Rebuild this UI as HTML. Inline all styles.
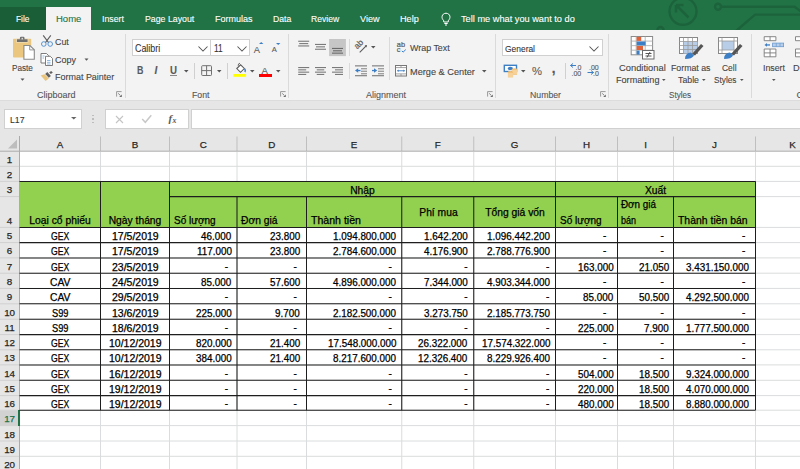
<!DOCTYPE html>
<html><head><meta charset="utf-8"><style>
html,body{margin:0;padding:0;}
body{width:800px;height:469px;overflow:hidden;position:relative;background:#fff;font-family:"Liberation Sans", sans-serif;}
.t{position:absolute;white-space:pre;line-height:1;transform-origin:0 0;-webkit-text-stroke:0.1px currentColor;}
.c{-webkit-text-stroke:0.25px currentColor;}
svg{shape-rendering:auto;}
</style></head><body>
<div style="position:absolute;left:0px;top:0px;width:800px;height:30px;background:#217346;"></div><svg style="position:absolute;left:600px;top:0px;overflow:visible;" width="200" height="30" viewBox="0 0 200 30">
<g fill="none" stroke="#1c633c" stroke-width="2.4">
<circle cx="83" cy="11.3" r="13.5"/>
<path d="M88.5 17.5 L76.5 5.5 M76 5 L76 12.5 M76 5 L83.5 5" stroke-width="2.6"/>
<circle cx="118" cy="6.8" r="3"/>
<path d="M121 6.8 L194.5 6.8 L203 13"/>
<path d="M136 31 L155 14.6 L205 14.6"/>
<circle cx="60.5" cy="30" r="3"/>
</g></svg><div style="position:absolute;left:0px;top:7px;width:46px;height:23px;background:#1a5e38;"></div><div style="position:absolute;left:46px;top:7px;width:45px;height:24px;background:#f3f3f3;"></div><svg style="position:absolute;left:440px;top:12px;overflow:visible;" width="13" height="14" viewBox="0 0 13 14"><g fill="none" stroke="#ffffff" stroke-width="1">
<path d="M3.5 8.2 C1.2 6.5 1.3 1.5 6 1.2 C10.7 1.5 10.8 6.5 8.5 8.2 L8.2 10 L3.8 10 Z"/>
<path d="M4.3 11.5 L7.7 11.5 M5 13 L7 13"/></g></svg><div style="position:absolute;left:0px;top:30px;width:800px;height:70px;background:#f3f3f3;"></div><div style="position:absolute;left:0px;top:100px;width:800px;height:1px;background:#dcdcdc;"></div><div style="position:absolute;left:0px;top:101px;width:800px;height:50px;background:#e6e6e6;"></div><div style="position:absolute;left:125px;top:34px;width:1px;height:64px;background:#dadada;"></div><div style="position:absolute;left:288px;top:34px;width:1px;height:64px;background:#dadada;"></div><div style="position:absolute;left:495px;top:34px;width:1px;height:64px;background:#dadada;"></div><div style="position:absolute;left:608px;top:34px;width:1px;height:64px;background:#dadada;"></div><div style="position:absolute;left:751px;top:34px;width:1px;height:64px;background:#dadada;"></div><svg style="position:absolute;left:12px;top:36px;overflow:visible;" width="24" height="24" viewBox="0 0 24 24">
<rect x="1" y="2.8" width="18.2" height="18.8" rx="0.8" fill="#ebc67f"/>
<rect x="4.2" y="2.6" width="12.1" height="4" fill="#f1e3c6"/><path d="M4.9 3.3 h10.7 v2.7 h-10.7 z" fill="#6f6f6f"/>
<path d="M7.9 3.5 v-1.6 q0 -1.2 1.2 -1.2 h2.2 q1.2 0 1.2 1.2 v1.6 z" fill="#6f6f6f"/>
<rect x="9.5" y="1.8" width="1.5" height="1.6" fill="#d8d8d8"/>
<path d="M11.9 9.5 h6 l4.4 4.3 v9.4 h-10.4 z" fill="#ffffff" stroke="#8a8a8a" stroke-width="1.1"/>
<path d="M17.7 9.5 v4.4 h4.5" fill="none" stroke="#8a8a8a" stroke-width="0.9"/>
</svg><svg style="position:absolute;left:19.5px;top:77.5px;overflow:visible;" width="5" height="3" viewBox="0 0 5 3"><path d="M0.5 0.5 h4 l-2 2.2 z" fill="#555"/></svg><svg style="position:absolute;left:40px;top:34px;overflow:visible;" width="14" height="14" viewBox="0 0 14 14">
<path d="M3.2 1.3 L8.6 8.6 M10.8 1.3 L5.4 8.6" stroke="#5f5f5f" stroke-width="1.1" fill="none"/>
<circle cx="3.8" cy="10" r="2.3" fill="none" stroke="#4f8fd0" stroke-width="0.95"/>
<circle cx="10.2" cy="10" r="2.3" fill="none" stroke="#4f8fd0" stroke-width="0.95"/></svg><svg style="position:absolute;left:40px;top:52px;overflow:visible;" width="14" height="14" viewBox="0 0 14 14">
<path d="M1 1.5 h5.5 l2.2 2.2 v7.3 h-7.7 z" fill="#fff" stroke="#6e6e6e" stroke-width="0.9"/>
<path d="M5.5 4.3 h4.8 l2.2 2.2 v7 h-7 z" fill="#fff" stroke="#6e6e6e" stroke-width="0.9"/>
<path d="M2.5 4 h2 M2.5 6 h1.5 M7 8.5 h3.5 M7 10.3 h3.5 M7 12 h3.5" stroke="#5b9bd5" stroke-width="0.7"/></svg><svg style="position:absolute;left:83.5px;top:58.3px;overflow:visible;" width="5" height="3" viewBox="0 0 5 3"><path d="M0.5 0.5 h4 l-2 2.2 z" fill="#555"/></svg><svg style="position:absolute;left:40px;top:70px;overflow:visible;" width="14" height="13" viewBox="0 0 14 13">
<path d="M0.7 5.6 L4.5 4.3 L8.8 8.4 L5.6 11.1 Z" fill="#e9c47d"/>
<path d="M5.2 3.9 L7.3 2 L10.9 6 L8.8 7.7 Z" fill="#5f5f5f"/>
<path d="M9.2 2.4 L11.1 0.9 L12.8 2.4 L10.9 4.1 Z" fill="#5f5f5f"/></svg><svg style="position:absolute;left:115.5px;top:90.8px;overflow:visible;" width="6" height="6" viewBox="0 0 6 6"><path d="M0.6 5.6 v-5 h5" fill="none" stroke="#8f8f8f" stroke-width="0.9"/><path d="M2.2 2.4 L4.3 4.4" stroke="#777" stroke-width="0.9" fill="none"/><path d="M5.8 3.4 v2.6 h-2.6 z" fill="#6a6a6a"/></svg><div style="position:absolute;left:132px;top:39px;width:78.5px;height:17px;background:#ffffff;box-sizing:border-box;border:1px solid #d0d0d0;"></div><div style="position:absolute;left:210px;top:39px;width:39.5px;height:17px;background:#ffffff;box-sizing:border-box;border:1px solid #d0d0d0;"></div><svg style="position:absolute;left:198px;top:45.8px;overflow:visible;" width="10" height="6" viewBox="0 0 10 6"><path d="M0.5 0.5 L5 5 L9.5 0.5" fill="none" stroke="#555" stroke-width="1.05"/></svg><svg style="position:absolute;left:236.8px;top:45.8px;overflow:visible;" width="10" height="6" viewBox="0 0 10 6"><path d="M0.5 0.5 L5 5 L9.5 0.5" fill="none" stroke="#555" stroke-width="1.05"/></svg><svg style="position:absolute;left:258.7px;top:42.3px;overflow:visible;" width="5" height="3" viewBox="0 0 5 3"><path d="M0 2 L2.2 0 L4.4 2 Z" fill="#3d7fc6"/></svg><svg style="position:absolute;left:275.6px;top:42.5px;overflow:visible;" width="5" height="3" viewBox="0 0 5 3"><path d="M0 0 L2.2 2 L4.4 0 Z" fill="#3d7fc6"/></svg><div style="position:absolute;left:170px;top:75px;width:7.2px;height:1px;background:#8a8a8a;"></div><svg style="position:absolute;left:184.3px;top:70px;overflow:visible;" width="5" height="3" viewBox="0 0 5 3"><path d="M0 0 h4.5 l-2.25 2.4 z" fill="#555"/></svg><div style="position:absolute;left:194px;top:63px;width:1px;height:16px;background:#d0d0d0;"></div><svg style="position:absolute;left:201px;top:65px;overflow:visible;" width="12" height="12" viewBox="0 0 12 12"><rect x="0.7" y="0.7" width="9.8" height="9.8" fill="none" stroke="#707070" stroke-width="1" rx="0.8"/><path d="M5.6 0.7 v9.8 M0.7 5.6 h9.8" stroke="#707070" stroke-width="1"/></svg><svg style="position:absolute;left:217px;top:70px;overflow:visible;" width="5" height="3" viewBox="0 0 5 3"><path d="M0 0 h4.5 l-2.25 2.4 z" fill="#555"/></svg><div style="position:absolute;left:227px;top:63px;width:1px;height:16px;background:#d0d0d0;"></div><svg style="position:absolute;left:233px;top:62px;overflow:visible;" width="14" height="16" viewBox="0 0 14 16">
<path d="M3.8 6.5 L7.6 2.8 L11.3 6.5 L7.5 10.3 Z" fill="#fff" stroke="#5a5a5a" stroke-width="1.05"/>
<path d="M5.2 3.8 Q5 1.4 7 1.2" fill="none" stroke="#5a5a5a" stroke-width="0.9"/>
<path d="M11.6 6.8 q1.4 1.5 0.3 3.2" fill="none" stroke="#3d7fc6" stroke-width="1.6"/>
<rect x="0.3" y="12" width="12.8" height="2.8" fill="#ffff00"/></svg><svg style="position:absolute;left:250px;top:70px;overflow:visible;" width="5" height="3" viewBox="0 0 5 3"><path d="M0 0 h4.5 l-2.25 2.4 z" fill="#555"/></svg><div style="position:absolute;left:259.4px;top:74px;width:12.6px;height:3px;background:#ff0000;"></div><svg style="position:absolute;left:276px;top:70px;overflow:visible;" width="5" height="3" viewBox="0 0 5 3"><path d="M0 0 h4.5 l-2.25 2.4 z" fill="#555"/></svg><svg style="position:absolute;left:280px;top:90.8px;overflow:visible;" width="6" height="6" viewBox="0 0 6 6"><path d="M0.6 5.6 v-5 h5" fill="none" stroke="#8f8f8f" stroke-width="0.9"/><path d="M2.2 2.4 L4.3 4.4" stroke="#777" stroke-width="0.9" fill="none"/><path d="M5.8 3.4 v2.6 h-2.6 z" fill="#6a6a6a"/></svg><svg style="position:absolute;left:296px;top:38px;overflow:visible;" width="100" height="42" viewBox="0 0 100 42"><rect x="2.2" y="2.7" width="11" height="1.1" fill="#7a7a7a"/><rect x="3.2" y="5.050000000000001" width="9" height="1.1" fill="#7a7a7a"/><rect x="2.2" y="7.4" width="11" height="1.1" fill="#7a7a7a"/><rect x="19" y="5.9" width="11" height="1.1" fill="#7a7a7a"/><rect x="20" y="8.3" width="9" height="1.1" fill="#7a7a7a"/><rect x="19" y="10.7" width="11" height="1.1" fill="#7a7a7a"/><rect x="33.1" y="1" width="16.8" height="17.1" fill="#c6c6c6"/><rect x="36" y="9.9" width="11" height="1.1" fill="#6a6a6a"/><rect x="37" y="12.25" width="9" height="1.1" fill="#6a6a6a"/><rect x="36" y="14.600000000000001" width="11" height="1.1" fill="#6a6a6a"/><rect x="2.2" y="29.0" width="11" height="1.1" fill="#7a7a7a"/><rect x="2.2" y="31.3" width="8" height="1.1" fill="#7a7a7a"/><rect x="2.2" y="33.6" width="11" height="1.1" fill="#7a7a7a"/><rect x="2.2" y="35.9" width="8" height="1.1" fill="#7a7a7a"/><rect x="19" y="29.0" width="11" height="1.1" fill="#7a7a7a"/><rect x="20.75" y="31.3" width="7.5" height="1.1" fill="#7a7a7a"/><rect x="19" y="33.6" width="11" height="1.1" fill="#7a7a7a"/><rect x="20.75" y="35.9" width="7.5" height="1.1" fill="#7a7a7a"/><rect x="36" y="29.0" width="11" height="1.1" fill="#7a7a7a"/><rect x="39" y="31.3" width="8" height="1.1" fill="#7a7a7a"/><rect x="36" y="33.6" width="11" height="1.1" fill="#7a7a7a"/><rect x="39" y="35.9" width="8" height="1.1" fill="#7a7a7a"/></svg><div style="position:absolute;left:349px;top:39px;width:1px;height:17px;background:#dadada;"></div><div style="position:absolute;left:349px;top:63px;width:1px;height:16px;background:#dadada;"></div><svg style="position:absolute;left:350px;top:36px;overflow:visible;" width="26" height="20" viewBox="0 0 26 20"><text x="7.2" y="13.6" font-family="Liberation Sans" font-size="8.4" fill="#5a5a5a" stroke="#5a5a5a" stroke-width="0.2" transform="rotate(-45 7.2 13.6)">ab</text>
<path d="M9.7 16.4 L16.4 9.7" stroke="#5a5a5a" stroke-width="1.1"/><path d="M14.6 9.6 L17 9 L16.4 11.4 Z" fill="#5a5a5a"/></svg><svg style="position:absolute;left:370.5px;top:46px;overflow:visible;" width="5" height="3" viewBox="0 0 5 3"><path d="M0 0 h4.5 l-2.25 2.4 z" fill="#555"/></svg><svg style="position:absolute;left:354px;top:64px;overflow:visible;" width="32" height="13" viewBox="0 0 32 13"><rect x="1" y="1.2" width="12" height="1.3" fill="#8c8c8c"/><rect x="7" y="4.2" width="6" height="1.1" fill="#8c8c8c"/><rect x="7" y="6.7" width="6" height="1.1" fill="#8c8c8c"/><rect x="7" y="9.2" width="6" height="1.1" fill="#8c8c8c"/><rect x="1" y="11" width="12" height="1.3" fill="#8c8c8c"/><path d="M1 6.5 L4.2 4.2 V8.8 Z" fill="#3d7fc6"/><rect x="3.5" y="5.9" width="3" height="1.3" fill="#3d7fc6"/><rect x="18" y="1.2" width="12" height="1.3" fill="#8c8c8c"/><rect x="24" y="4.2" width="6" height="1.1" fill="#8c8c8c"/><rect x="24" y="6.7" width="6" height="1.1" fill="#8c8c8c"/><rect x="24" y="9.2" width="6" height="1.1" fill="#8c8c8c"/><rect x="18" y="11" width="12" height="1.3" fill="#8c8c8c"/><path d="M23.2 6.5 L20 4.2 V8.8 Z" fill="#3d7fc6"/><rect x="18" y="5.9" width="3" height="1.3" fill="#3d7fc6"/></svg><div style="position:absolute;left:389px;top:37px;width:1px;height:43px;background:#dadada;"></div><svg style="position:absolute;left:396px;top:41px;overflow:visible;" width="12" height="13" viewBox="0 0 12 13"><text x="0.8" y="5.8" font-family="Liberation Sans" font-size="7.4" fill="#5a5a5a" stroke="#5a5a5a" stroke-width="0.2">ab</text>
<text x="0.8" y="11.4" font-family="Liberation Sans" font-size="7.4" fill="#5a5a5a" stroke="#5a5a5a" stroke-width="0.2">c</text>
<path d="M5.8 10 L7.2 11 L9.8 8.6" fill="none" stroke="#3d7fc6" stroke-width="1"/></svg><svg style="position:absolute;left:394px;top:64px;overflow:visible;" width="14" height="13" viewBox="0 0 14 13"><rect x="1.5" y="1.5" width="11" height="10.5" fill="#fff" stroke="#777" stroke-width="1"/>
<path d="M1.5 3.6 h11 M1.5 9.9 h11 M7 1.5 v2.1 M7 9.9 v2.1" stroke="#8a8a8a" stroke-width="0.8"/>
<path d="M3.5 6.75 h7" stroke="#3d7fc6" stroke-width="0.9"/>
<path d="M3 6.75 L4.6 5.6 V7.9 Z M11 6.75 L9.4 5.6 V7.9 Z" fill="#3d7fc6"/></svg><svg style="position:absolute;left:482px;top:70px;overflow:visible;" width="5" height="3" viewBox="0 0 5 3"><path d="M0 0 h4.5 l-2.25 2.4 z" fill="#555"/></svg><svg style="position:absolute;left:486.5px;top:90.8px;overflow:visible;" width="6" height="6" viewBox="0 0 6 6"><path d="M0.6 5.6 v-5 h5" fill="none" stroke="#8f8f8f" stroke-width="0.9"/><path d="M2.2 2.4 L4.3 4.4" stroke="#777" stroke-width="0.9" fill="none"/><path d="M5.8 3.4 v2.6 h-2.6 z" fill="#6a6a6a"/></svg><div style="position:absolute;left:502px;top:39px;width:100.5px;height:17.3px;background:#ffffff;box-sizing:border-box;border:1px solid #d0d0d0;"></div><svg style="position:absolute;left:589px;top:45.8px;overflow:visible;" width="10" height="6" viewBox="0 0 10 6"><path d="M0.5 0.5 L5 5 L9.5 0.5" fill="none" stroke="#555" stroke-width="1.05"/></svg><svg style="position:absolute;left:503px;top:64px;overflow:visible;" width="16" height="14" viewBox="0 0 16 14"><rect x="1.3" y="1.3" width="12.2" height="6.2" fill="#fff" stroke="#3d7fc6" stroke-width="1.4"/>
<ellipse cx="7.4" cy="4.4" rx="2.6" ry="1.7" fill="#3d7fc6"/>
<ellipse cx="11.5" cy="5.2" rx="2.6" ry="1" fill="#f3c27a"/><rect x="8.9" y="5.2" width="5.2" height="5.6" fill="#f3c27a"/><path d="M8.9 7 h5.2 M8.9 9 h5.2" stroke="#fff" stroke-width="0.5"/>
<ellipse cx="7.5" cy="8" rx="2.6" ry="1" fill="#f3c27a"/><rect x="4.9" y="8" width="5.2" height="5.4" fill="#f3c27a"/><path d="M4.9 10 h5.2 M4.9 12 h5.2" stroke="#fff" stroke-width="0.5"/></svg><svg style="position:absolute;left:521px;top:70px;overflow:visible;" width="5" height="3" viewBox="0 0 5 3"><path d="M0 0 h4.5 l-2.25 2.4 z" fill="#555"/></svg><div style="position:absolute;left:565px;top:63px;width:1px;height:16px;background:#d0d0d0;"></div><svg style="position:absolute;left:570px;top:63px;overflow:visible;" width="6" height="5" viewBox="0 0 6 5"><path d="M0.5 2.5 L3 0.5 M0.5 2.5 L3 4.5 M0.5 2.5 H6" stroke="#3d7fc6" stroke-width="1" fill="none"/></svg><svg style="position:absolute;left:587px;top:70px;overflow:visible;" width="7" height="5" viewBox="0 0 7 5"><path d="M6.5 2.5 L4 0.5 M6.5 2.5 L4 4.5 M0.5 2.5 H6.5" stroke="#3d7fc6" stroke-width="1" fill="none"/></svg><svg style="position:absolute;left:599.5px;top:90.8px;overflow:visible;" width="6" height="6" viewBox="0 0 6 6"><path d="M0.6 5.6 v-5 h5" fill="none" stroke="#8f8f8f" stroke-width="0.9"/><path d="M2.2 2.4 L4.3 4.4" stroke="#777" stroke-width="0.9" fill="none"/><path d="M5.8 3.4 v2.6 h-2.6 z" fill="#6a6a6a"/></svg><svg style="position:absolute;left:630px;top:36px;overflow:visible;" width="25" height="24" viewBox="0 0 25 24"><rect x="1.2" y="0.5" width="21.4" height="18.3" fill="#fff" stroke="#8a8a8a" stroke-width="1"/>
<path d="M1.2 5.1 h21.4 M1.2 9.65 h21.4 M1.2 14.2 h21.4 M6.2 0.5 v18.3 M15.2 0.5 v18.3" stroke="#a8a8a8" stroke-width="0.8"/>
<rect x="6.6" y="0.9" width="4.6" height="4" fill="#e0623a"/>
<rect x="6.6" y="5.5" width="9" height="3.9" fill="#3d7fc6"/>
<rect x="6.6" y="10" width="6.4" height="4" fill="#e0623a"/>
<rect x="6.6" y="14.6" width="3" height="4" fill="#3d7fc6"/>
<rect x="12.5" y="14.5" width="11.5" height="8.5" fill="#fff" stroke="#6a6a6a" stroke-width="1"/>
<path d="M15.5 17.5 h6 M15.5 20 h6 M20 16 L17 21.5" stroke="#444" stroke-width="0.9" fill="none"/></svg><svg style="position:absolute;left:662px;top:79px;overflow:visible;" width="4" height="2" viewBox="0 0 4 2"><path d="M0 0 h3.6 l-1.8 2 z" fill="#555"/></svg><svg style="position:absolute;left:679px;top:37px;overflow:visible;" width="26" height="23" viewBox="0 0 26 23"><rect x="0.5" y="0.5" width="18" height="16" fill="#fff" stroke="#888" stroke-width="1"/>
<rect x="4.5" y="4.5" width="14" height="12" fill="#b7cde8"/>
<path d="M0.5 4.5 h18 M0.5 8.5 h18 M0.5 12.5 h18 M4.5 0.5 v16 M9 0.5 v16 M13.5 0.5 v16" stroke="#999" stroke-width="0.8"/>
<path d="M13 17 L22 7 L24.5 9 L16 18.5 Z" fill="#555"/>
<path d="M6 22 Q6 16 12 15.5 L15 18.5 Q13 22 6 22 Z" fill="#3d7fc6"/></svg><svg style="position:absolute;left:701.5px;top:79px;overflow:visible;" width="4" height="2" viewBox="0 0 4 2"><path d="M0 0 h3.6 l-1.8 2 z" fill="#555"/></svg><svg style="position:absolute;left:718px;top:37px;overflow:visible;" width="26" height="23" viewBox="0 0 26 23"><rect x="0.5" y="0.5" width="19" height="16" fill="#fff" stroke="#888" stroke-width="1"/>
<rect x="4" y="4" width="12" height="9" fill="#b7cde8"/>
<path d="M0.5 4 h19 M0.5 13 h19 M4 0.5 v16 M16 0.5 v16" stroke="#999" stroke-width="0.8"/>
<path d="M13 17 L22 7 L24.5 9 L16 18.5 Z" fill="#555"/>
<path d="M6 22 Q6 16 12 15.5 L15 18.5 Q13 22 6 22 Z" fill="#3d7fc6"/></svg><svg style="position:absolute;left:740px;top:79px;overflow:visible;" width="4" height="2" viewBox="0 0 4 2"><path d="M0 0 h3.6 l-1.8 2 z" fill="#555"/></svg><svg style="position:absolute;left:763px;top:35px;overflow:visible;" width="37" height="23" viewBox="0 0 37 23"><path d="M1.2 1.7 h11.7 v4 h-11.7 z M7.05 1.7 v4" fill="#fff" stroke="#7a7a7a" stroke-width="0.9"/>
<path d="M1.2 14 h11.7 v7.8 h-11.7 z M7.05 14 v7.8 M1.2 17.9 h11.7" fill="#fff" stroke="#7a7a7a" stroke-width="0.9"/>
<rect x="9.6" y="8.1" width="11" height="3.6" fill="#b7cde8" stroke="#6a9bd1" stroke-width="0.8"/>
<path d="M13.3 8.1 v3.6 M17 8.1 v3.6" stroke="#6a9bd1" stroke-width="0.7"/>
<path d="M1.5 9.9 L4 8 V11.8 Z" fill="#3d7fc6"/><rect x="3.5" y="9.3" width="3.5" height="1.3" fill="#3d7fc6"/>
<path d="M32.5 1.7 h8 v4 h-8 z M32.5 14 h8 v7.8 h-8 z M32.5 17.9 h8" fill="#fff" stroke="#7a7a7a" stroke-width="0.9"/></svg><svg style="position:absolute;left:771.7px;top:79px;overflow:visible;" width="4" height="2" viewBox="0 0 4 2"><path d="M0 0 h3.6 l-1.8 2 z" fill="#555"/></svg><div style="position:absolute;left:4px;top:109px;width:77.5px;height:19.5px;background:#ffffff;box-sizing:border-box;border:1px solid #d0d0d0;"></div><svg style="position:absolute;left:71px;top:117.3px;overflow:visible;" width="6" height="3" viewBox="0 0 6 3"><path d="M0 0 h5.5 l-2.75 2.6 z" fill="#666"/></svg><div style="position:absolute;left:92.3px;top:114.5px;width:1.6px;height:1.8px;background:#bdbdbd;"></div><div style="position:absolute;left:92.3px;top:118px;width:1.6px;height:1.8px;background:#bdbdbd;"></div><div style="position:absolute;left:92.3px;top:121.5px;width:1.6px;height:1.8px;background:#bdbdbd;"></div><div style="position:absolute;left:104.5px;top:109px;width:84px;height:19.5px;background:#ffffff;box-sizing:border-box;border:1px solid #d0d0d0;"></div><div style="position:absolute;left:191px;top:109px;width:609px;height:19.5px;background:#ffffff;box-sizing:border-box;border:1px solid #d0d0d0;border-right:none;"></div><svg style="position:absolute;left:115px;top:115px;overflow:visible;" width="9" height="9" viewBox="0 0 9 9"><path d="M1 1 L8 8 M8 1 L1 8" stroke="#c4c4c4" stroke-width="1.1"/></svg><svg style="position:absolute;left:141px;top:114px;overflow:visible;" width="12" height="10" viewBox="0 0 12 10"><path d="M1.2 5 L4.3 8.3 L10.3 1.3" fill="none" stroke="#c8c8c8" stroke-width="1.5"/></svg><svg style="position:absolute;left:168px;top:113px;overflow:visible;" width="12" height="12" viewBox="0 0 12 12"><text x="0.5" y="8.8" font-family="Liberation Serif" font-style="italic" font-weight="bold" font-size="11" fill="#5a5a5a">f</text><text x="4.6" y="9.6" font-family="Liberation Serif" font-style="italic" font-weight="bold" font-size="7.8" fill="#5a5a5a">x</text></svg><div style="position:absolute;left:20px;top:152px;width:780px;height:317px;background:#ffffff;"></div><div style="position:absolute;left:0px;top:151px;width:19.5px;height:318px;background:#e6e6e6;"></div><svg style="position:absolute;left:7px;top:139px;overflow:visible;" width="11" height="10" viewBox="0 0 11 10"><path d="M10 0.5 V9.5 H1 Z" fill="#bdbdbd"/></svg><svg style="position:absolute;left:0px;top:0px;overflow:visible;" width="800" height="469" viewBox="0 0 800 469"><line x1="100.5" y1="152" x2="100.5" y2="469" stroke="#dadcdd" stroke-width="1"/><line x1="169.5" y1="152" x2="169.5" y2="469" stroke="#dadcdd" stroke-width="1"/><line x1="237" y1="152" x2="237" y2="469" stroke="#dadcdd" stroke-width="1"/><line x1="306.5" y1="152" x2="306.5" y2="469" stroke="#dadcdd" stroke-width="1"/><line x1="401.75" y1="152" x2="401.75" y2="469" stroke="#dadcdd" stroke-width="1"/><line x1="473.75" y1="152" x2="473.75" y2="469" stroke="#dadcdd" stroke-width="1"/><line x1="555.5" y1="152" x2="555.5" y2="469" stroke="#dadcdd" stroke-width="1"/><line x1="617.5" y1="152" x2="617.5" y2="469" stroke="#dadcdd" stroke-width="1"/><line x1="673.5" y1="152" x2="673.5" y2="469" stroke="#dadcdd" stroke-width="1"/><line x1="755.5" y1="152" x2="755.5" y2="469" stroke="#dadcdd" stroke-width="1"/><line x1="20" y1="166.3" x2="800" y2="166.3" stroke="#dadcdd" stroke-width="1"/><line x1="20" y1="181.4" x2="800" y2="181.4" stroke="#dadcdd" stroke-width="1"/><line x1="20" y1="196.6" x2="800" y2="196.6" stroke="#dadcdd" stroke-width="1"/><line x1="20" y1="227.4" x2="800" y2="227.4" stroke="#dadcdd" stroke-width="1"/><line x1="20" y1="242.6" x2="800" y2="242.6" stroke="#dadcdd" stroke-width="1"/><line x1="20" y1="257.9" x2="800" y2="257.9" stroke="#dadcdd" stroke-width="1"/><line x1="20" y1="273.2" x2="800" y2="273.2" stroke="#dadcdd" stroke-width="1"/><line x1="20" y1="288.4" x2="800" y2="288.4" stroke="#dadcdd" stroke-width="1"/><line x1="20" y1="303.8" x2="800" y2="303.8" stroke="#dadcdd" stroke-width="1"/><line x1="20" y1="319.2" x2="800" y2="319.2" stroke="#dadcdd" stroke-width="1"/><line x1="20" y1="334.6" x2="800" y2="334.6" stroke="#dadcdd" stroke-width="1"/><line x1="20" y1="349.8" x2="800" y2="349.8" stroke="#dadcdd" stroke-width="1"/><line x1="20" y1="364.9" x2="800" y2="364.9" stroke="#dadcdd" stroke-width="1"/><line x1="20" y1="380.3" x2="800" y2="380.3" stroke="#dadcdd" stroke-width="1"/><line x1="20" y1="395.6" x2="800" y2="395.6" stroke="#dadcdd" stroke-width="1"/><line x1="20" y1="410.2" x2="800" y2="410.2" stroke="#dadcdd" stroke-width="1"/><line x1="20" y1="425.6" x2="800" y2="425.6" stroke="#dadcdd" stroke-width="1"/><line x1="20" y1="441.0" x2="800" y2="441.0" stroke="#dadcdd" stroke-width="1"/><line x1="20" y1="456.3" x2="800" y2="456.3" stroke="#dadcdd" stroke-width="1"/><line x1="100.5" y1="136.5" x2="100.5" y2="151" stroke="#bfbfbf" stroke-width="1"/><line x1="169.5" y1="136.5" x2="169.5" y2="151" stroke="#bfbfbf" stroke-width="1"/><line x1="237" y1="136.5" x2="237" y2="151" stroke="#bfbfbf" stroke-width="1"/><line x1="306.5" y1="136.5" x2="306.5" y2="151" stroke="#bfbfbf" stroke-width="1"/><line x1="401.75" y1="136.5" x2="401.75" y2="151" stroke="#bfbfbf" stroke-width="1"/><line x1="473.75" y1="136.5" x2="473.75" y2="151" stroke="#bfbfbf" stroke-width="1"/><line x1="555.5" y1="136.5" x2="555.5" y2="151" stroke="#bfbfbf" stroke-width="1"/><line x1="617.5" y1="136.5" x2="617.5" y2="151" stroke="#bfbfbf" stroke-width="1"/><line x1="673.5" y1="136.5" x2="673.5" y2="151" stroke="#bfbfbf" stroke-width="1"/><line x1="755.5" y1="136.5" x2="755.5" y2="151" stroke="#bfbfbf" stroke-width="1"/><line x1="0" y1="166.3" x2="19.5" y2="166.3" stroke="#d0d0d0" stroke-width="1"/><line x1="0" y1="181.4" x2="19.5" y2="181.4" stroke="#d0d0d0" stroke-width="1"/><line x1="0" y1="196.6" x2="19.5" y2="196.6" stroke="#d0d0d0" stroke-width="1"/><line x1="0" y1="227.4" x2="19.5" y2="227.4" stroke="#d0d0d0" stroke-width="1"/><line x1="0" y1="242.6" x2="19.5" y2="242.6" stroke="#d0d0d0" stroke-width="1"/><line x1="0" y1="257.9" x2="19.5" y2="257.9" stroke="#d0d0d0" stroke-width="1"/><line x1="0" y1="273.2" x2="19.5" y2="273.2" stroke="#d0d0d0" stroke-width="1"/><line x1="0" y1="288.4" x2="19.5" y2="288.4" stroke="#d0d0d0" stroke-width="1"/><line x1="0" y1="303.8" x2="19.5" y2="303.8" stroke="#d0d0d0" stroke-width="1"/><line x1="0" y1="319.2" x2="19.5" y2="319.2" stroke="#d0d0d0" stroke-width="1"/><line x1="0" y1="334.6" x2="19.5" y2="334.6" stroke="#d0d0d0" stroke-width="1"/><line x1="0" y1="349.8" x2="19.5" y2="349.8" stroke="#d0d0d0" stroke-width="1"/><line x1="0" y1="364.9" x2="19.5" y2="364.9" stroke="#d0d0d0" stroke-width="1"/><line x1="0" y1="380.3" x2="19.5" y2="380.3" stroke="#d0d0d0" stroke-width="1"/><line x1="0" y1="395.6" x2="19.5" y2="395.6" stroke="#d0d0d0" stroke-width="1"/><line x1="0" y1="410.2" x2="19.5" y2="410.2" stroke="#d0d0d0" stroke-width="1"/><line x1="0" y1="425.6" x2="19.5" y2="425.6" stroke="#d0d0d0" stroke-width="1"/><line x1="0" y1="441.0" x2="19.5" y2="441.0" stroke="#d0d0d0" stroke-width="1"/><line x1="0" y1="456.3" x2="19.5" y2="456.3" stroke="#d0d0d0" stroke-width="1"/><line x1="0" y1="151.2" x2="800" y2="151.2" stroke="#ababab" stroke-width="1"/><line x1="19.5" y1="136" x2="19.5" y2="469" stroke="#ababab" stroke-width="1"/></svg><div style="position:absolute;left:0px;top:410.7px;width:19px;height:14.900000000000034px;background:#d2d2d2;"></div><div style="position:absolute;left:18px;top:410.2px;width:2px;height:15.400000000000034px;background:#217346;"></div><div style="position:absolute;left:20.0px;top:181.4px;width:736.0px;height:46.0px;background:#92d050;"></div><svg style="position:absolute;left:0px;top:0px;overflow:visible;" width="800" height="469" viewBox="0 0 800 469"><line x1="19.5" y1="181.4" x2="755.5" y2="181.4" stroke="#1e1e1e" stroke-width="1.05"/><line x1="169.5" y1="196.6" x2="755.5" y2="196.6" stroke="#1e1e1e" stroke-width="1.05"/><line x1="19.5" y1="227.4" x2="755.5" y2="227.4" stroke="#1e1e1e" stroke-width="1.05"/><line x1="19.5" y1="242.6" x2="755.5" y2="242.6" stroke="#1e1e1e" stroke-width="1.05"/><line x1="19.5" y1="257.9" x2="755.5" y2="257.9" stroke="#1e1e1e" stroke-width="1.05"/><line x1="19.5" y1="273.2" x2="755.5" y2="273.2" stroke="#1e1e1e" stroke-width="1.05"/><line x1="19.5" y1="288.4" x2="755.5" y2="288.4" stroke="#1e1e1e" stroke-width="1.05"/><line x1="19.5" y1="303.8" x2="755.5" y2="303.8" stroke="#1e1e1e" stroke-width="1.05"/><line x1="19.5" y1="319.2" x2="755.5" y2="319.2" stroke="#1e1e1e" stroke-width="1.05"/><line x1="19.5" y1="334.6" x2="755.5" y2="334.6" stroke="#1e1e1e" stroke-width="1.05"/><line x1="19.5" y1="349.8" x2="755.5" y2="349.8" stroke="#1e1e1e" stroke-width="1.05"/><line x1="19.5" y1="364.9" x2="755.5" y2="364.9" stroke="#1e1e1e" stroke-width="1.05"/><line x1="19.5" y1="380.3" x2="755.5" y2="380.3" stroke="#1e1e1e" stroke-width="1.05"/><line x1="19.5" y1="395.6" x2="755.5" y2="395.6" stroke="#1e1e1e" stroke-width="1.05"/><line x1="19.5" y1="410.2" x2="755.5" y2="410.2" stroke="#1e1e1e" stroke-width="1.05"/><line x1="100.5" y1="181.4" x2="100.5" y2="410.2" stroke="#1e1e1e" stroke-width="1.05"/><line x1="169.5" y1="181.4" x2="169.5" y2="410.2" stroke="#1e1e1e" stroke-width="1.05"/><line x1="237" y1="196.6" x2="237" y2="410.2" stroke="#1e1e1e" stroke-width="1.05"/><line x1="306.5" y1="196.6" x2="306.5" y2="410.2" stroke="#1e1e1e" stroke-width="1.05"/><line x1="401.75" y1="196.6" x2="401.75" y2="410.2" stroke="#1e1e1e" stroke-width="1.05"/><line x1="473.75" y1="196.6" x2="473.75" y2="410.2" stroke="#1e1e1e" stroke-width="1.05"/><line x1="555.5" y1="181.4" x2="555.5" y2="410.2" stroke="#1e1e1e" stroke-width="1.05"/><line x1="617.5" y1="196.6" x2="617.5" y2="410.2" stroke="#1e1e1e" stroke-width="1.05"/><line x1="673.5" y1="196.6" x2="673.5" y2="410.2" stroke="#1e1e1e" stroke-width="1.05"/><line x1="755.5" y1="181.4" x2="755.5" y2="410.2" stroke="#1e1e1e" stroke-width="1.05"/></svg>
<div class="t " style="left:15.50px;top:13.84px;font-size:9.4px;color:#ffffff;transform:scaleX(0.8935);">File</div>
<div class="t " style="left:55.60px;top:13.84px;font-size:9.4px;color:#217346;transform:scaleX(1.0154);">Home</div>
<div class="t " style="left:101.75px;top:13.84px;font-size:9.4px;color:#ffffff;transform:scaleX(0.9380);">Insert</div>
<div class="t " style="left:144.50px;top:13.84px;font-size:9.4px;color:#ffffff;transform:scaleX(0.9353);">Page Layout</div>
<div class="t " style="left:214.50px;top:13.84px;font-size:9.4px;color:#ffffff;transform:scaleX(0.9596);">Formulas</div>
<div class="t " style="left:272.50px;top:13.84px;font-size:9.4px;color:#ffffff;transform:scaleX(0.9211);">Data</div>
<div class="t " style="left:311.25px;top:13.84px;font-size:9.4px;color:#ffffff;transform:scaleX(0.9187);">Review</div>
<div class="t " style="left:360.00px;top:13.84px;font-size:9.4px;color:#ffffff;transform:scaleX(0.9674);">View</div>
<div class="t " style="left:400.00px;top:13.84px;font-size:9.4px;color:#ffffff;transform:scaleX(0.9724);">Help</div>
<div class="t " style="left:461.25px;top:13.84px;font-size:9.4px;color:#ffffff;transform:scaleX(0.9833);">Tell me what you want to do</div>
<div class="t " style="left:12.00px;top:64.41px;font-size:9.2px;color:#444;transform:scaleX(0.8894);">Paste</div>
<div class="t " style="left:55.20px;top:37.71px;font-size:9.2px;color:#444;transform:scaleX(0.9642);">Cut</div>
<div class="t " style="left:55.20px;top:55.51px;font-size:9.2px;color:#444;transform:scaleX(0.9789);">Copy</div>
<div class="t " style="left:55.20px;top:72.61px;font-size:9.2px;color:#444;transform:scaleX(0.9759);">Format Painter</div>
<div class="t " style="left:37.00px;top:91.01px;font-size:9.2px;color:#555;transform:scaleX(0.9789);">Clipboard</div>
<div class="t " style="left:134.80px;top:43.73px;font-size:10px;color:#333;transform:scaleX(0.8891);">Calibri</div>
<div class="t " style="left:213.60px;top:43.73px;font-size:10px;color:#333;transform:scaleX(0.8277);">11</div>
<div class="t " style="left:253.80px;top:44.54px;font-size:9.4px;color:#5a5a5a;">A</div>
<div class="t " style="left:271.80px;top:46.07px;font-size:7.6px;color:#5a5a5a;">A</div>
<div class="t " style="left:136.70px;top:66.17px;font-size:10.2px;color:#5a5a5a;transform:scaleX(0.8696);font-weight:bold;">B</div>
<div class="t " style="left:154.60px;top:66.17px;font-size:10.2px;color:#5a5a5a;font-weight:bold;font-style:italic;">I</div>
<div class="t " style="left:170.10px;top:66.17px;font-size:10.2px;color:#5a5a5a;transform:scaleX(0.9512);font-weight:bold;">U</div>
<div class="t " style="left:261.50px;top:65.87px;font-size:9.6px;color:#5a5a5a;">A</div>
<div class="t " style="left:192.00px;top:90.51px;font-size:9.2px;color:#555;transform:scaleX(0.9516);">Font</div>
<div class="t " style="left:409.80px;top:44.01px;font-size:9.2px;color:#444;transform:scaleX(0.9676);">Wrap Text</div>
<div class="t " style="left:410.00px;top:68.01px;font-size:9.2px;color:#444;">Merge &amp; Center</div>
<div class="t " style="left:365.80px;top:91.01px;font-size:9.2px;color:#555;transform:scaleX(0.9790);">Alignment</div>
<div class="t " style="left:505.20px;top:43.79px;font-size:9.7px;color:#333;transform:scaleX(0.8704);">General</div>
<div class="t " style="left:532.00px;top:65.67px;font-size:11.5px;color:#5a5a5a;transform:scaleX(0.9771);">%</div>
<div class="t " style="left:551.50px;top:59.60px;font-size:15px;color:#5a5a5a;font-weight:bold;">,</div>
<div class="t " style="left:575.50px;top:63.87px;font-size:7px;color:#555;">.0</div>
<div class="t " style="left:571.50px;top:70.37px;font-size:7px;color:#555;">.00</div>
<div class="t " style="left:589.00px;top:63.87px;font-size:7px;color:#555;">.00</div>
<div class="t " style="left:593.00px;top:70.37px;font-size:7px;color:#555;">.0</div>
<div class="t " style="left:530.00px;top:91.01px;font-size:9.2px;color:#555;transform:scaleX(0.9484);">Number</div>
<div class="t " style="left:618.75px;top:64.01px;font-size:9.2px;color:#444;transform:scaleX(1.0166);">Conditional</div>
<div class="t " style="left:616.00px;top:76.01px;font-size:9.2px;color:#444;transform:scaleX(0.9904);">Formatting</div>
<div class="t " style="left:671.00px;top:64.01px;font-size:9.2px;color:#444;transform:scaleX(0.9550);">Format as</div>
<div class="t " style="left:678.00px;top:76.01px;font-size:9.2px;color:#444;transform:scaleX(0.9559);">Table</div>
<div class="t " style="left:721.70px;top:64.01px;font-size:9.2px;color:#444;transform:scaleX(0.9161);">Cell</div>
<div class="t " style="left:714.00px;top:76.01px;font-size:9.2px;color:#444;transform:scaleX(0.8989);">Styles</div>
<div class="t " style="left:668.80px;top:91.01px;font-size:9.2px;color:#555;transform:scaleX(0.8789);">Styles</div>
<div class="t " style="left:762.50px;top:64.01px;font-size:9.2px;color:#444;transform:scaleX(0.9572);">Insert</div>
<div class="t " style="left:793.00px;top:64.01px;font-size:9.2px;color:#444;">D</div>
<div class="t " style="left:796.50px;top:91.01px;font-size:9.2px;color:#555;">C</div>
<div class="t " style="left:9.50px;top:115.17px;font-size:9.6px;color:#333;transform:scaleX(0.9054);">L17</div>
<div class="t c" style="left:56.73px;top:139.70px;font-size:9.8px;color:#262626;">A</div>
<div class="t c" style="left:131.73px;top:139.70px;font-size:9.8px;color:#262626;">B</div>
<div class="t c" style="left:199.71px;top:139.70px;font-size:9.8px;color:#262626;">C</div>
<div class="t c" style="left:268.21px;top:139.70px;font-size:9.8px;color:#262626;">D</div>
<div class="t c" style="left:350.85px;top:139.70px;font-size:9.8px;color:#262626;">E</div>
<div class="t c" style="left:434.76px;top:139.70px;font-size:9.8px;color:#262626;">F</div>
<div class="t c" style="left:510.81px;top:139.70px;font-size:9.8px;color:#262626;">G</div>
<div class="t c" style="left:582.96px;top:139.70px;font-size:9.8px;color:#262626;">H</div>
<div class="t c" style="left:644.13px;top:139.70px;font-size:9.8px;color:#262626;">I</div>
<div class="t c" style="left:712.05px;top:139.70px;font-size:9.8px;color:#262626;">J</div>
<div class="t c" style="left:789.23px;top:139.70px;font-size:9.8px;color:#262626;">K</div>
<div class="t c" style="left:6.87px;top:154.80px;font-size:9.8px;color:#262626;">1</div>
<div class="t c" style="left:6.87px;top:169.90px;font-size:9.8px;color:#262626;">2</div>
<div class="t c" style="left:6.87px;top:185.10px;font-size:9.8px;color:#262626;">3</div>
<div class="t c" style="left:6.87px;top:215.90px;font-size:9.8px;color:#262626;">4</div>
<div class="t c" style="left:6.87px;top:231.10px;font-size:9.8px;color:#262626;">5</div>
<div class="t c" style="left:6.87px;top:246.40px;font-size:9.8px;color:#262626;">6</div>
<div class="t c" style="left:6.87px;top:261.70px;font-size:9.8px;color:#262626;">7</div>
<div class="t c" style="left:6.87px;top:276.90px;font-size:9.8px;color:#262626;">8</div>
<div class="t c" style="left:6.87px;top:292.30px;font-size:9.8px;color:#262626;">9</div>
<div class="t c" style="left:4.15px;top:307.70px;font-size:9.8px;color:#262626;">10</div>
<div class="t c" style="left:4.51px;top:323.10px;font-size:9.8px;color:#262626;">11</div>
<div class="t c" style="left:4.15px;top:338.30px;font-size:9.8px;color:#262626;">12</div>
<div class="t c" style="left:4.15px;top:353.40px;font-size:9.8px;color:#262626;">13</div>
<div class="t c" style="left:4.15px;top:368.80px;font-size:9.8px;color:#262626;">14</div>
<div class="t c" style="left:4.15px;top:384.10px;font-size:9.8px;color:#262626;">15</div>
<div class="t c" style="left:4.15px;top:398.70px;font-size:9.8px;color:#262626;">16</div>
<div class="t c" style="left:4.15px;top:414.10px;font-size:9.8px;color:#217346;">17</div>
<div class="t c" style="left:4.15px;top:429.50px;font-size:9.8px;color:#262626;">18</div>
<div class="t c" style="left:4.15px;top:444.80px;font-size:9.8px;color:#262626;">19</div>
<div class="t c" style="left:4.15px;top:460.10px;font-size:9.8px;color:#262626;">20</div>
<div class="t c" style="left:29.37px;top:216.48px;font-size:10.3px;color:#000;">Loại cổ phiếu</div>
<div class="t c" style="left:108.66px;top:216.48px;font-size:10.3px;color:#000;">Ngày tháng</div>
<div class="t c" style="left:350.19px;top:185.78px;font-size:10.3px;color:#000;">Nhập</div>
<div class="t c" style="left:644.91px;top:185.78px;font-size:10.3px;color:#000;">Xuất</div>
<div class="t c" style="left:174.00px;top:216.48px;font-size:10.3px;color:#000;transform:scaleX(0.9710);">Số lượng</div>
<div class="t c" style="left:241.00px;top:216.48px;font-size:10.3px;color:#000;">Đơn giá</div>
<div class="t c" style="left:310.70px;top:216.48px;font-size:10.3px;color:#000;transform:scaleX(1.0273);">Thành tiền</div>
<div class="t c" style="left:419.27px;top:207.78px;font-size:10.3px;color:#000;">Phí mua</div>
<div class="t c" style="left:485.25px;top:207.78px;font-size:10.3px;color:#000;">Tổng giá vốn</div>
<div class="t c" style="left:559.50px;top:216.48px;font-size:10.3px;color:#000;transform:scaleX(0.9710);">Số lượng</div>
<div class="t c" style="left:621.40px;top:200.48px;font-size:10.3px;color:#000;transform:scaleX(0.9581);">Đơn giá</div>
<div class="t c" style="left:621.40px;top:216.48px;font-size:10.3px;color:#000;transform:scaleX(0.8727);">bán</div>
<div class="t c" style="left:678.00px;top:216.48px;font-size:10.3px;color:#000;transform:scaleX(1.0131);">Thành tiền bán</div>
<div class="t c" style="left:50.90px;top:232.03px;font-size:10.0px;color:#000;transform:scaleX(0.8615);">GEX</div>
<div class="t c" style="left:111.64px;top:232.03px;font-size:10.0px;color:#000;transform:scaleX(1.0500);">17/5/2019</div>
<div class="t c" style="left:201.32px;top:232.03px;font-size:10.0px;color:#000;transform:scaleX(0.9850);">46.000</div>
<div class="t c" style="left:269.82px;top:232.03px;font-size:10.0px;color:#000;transform:scaleX(0.9850);">23.800</div>
<div class="t c" style="left:333.01px;top:232.03px;font-size:10.0px;color:#000;transform:scaleX(0.9850);">1.094.800.000</div>
<div class="t c" style="left:423.87px;top:232.03px;font-size:10.0px;color:#000;transform:scaleX(0.9850);">1.642.200</div>
<div class="t c" style="left:487.26px;top:232.03px;font-size:10.0px;color:#000;transform:scaleX(0.9850);">1.096.442.200</div>
<div class="t c" style="left:602.93px;top:231.03px;font-size:10.0px;color:#000;">-</div>
<div class="t c" style="left:660.53px;top:231.03px;font-size:10.0px;color:#000;">-</div>
<div class="t c" style="left:742.03px;top:231.03px;font-size:10.0px;color:#000;">-</div>
<div class="t c" style="left:50.90px;top:247.33px;font-size:10.0px;color:#000;transform:scaleX(0.8615);">GEX</div>
<div class="t c" style="left:111.64px;top:247.33px;font-size:10.0px;color:#000;transform:scaleX(1.0500);">17/5/2019</div>
<div class="t c" style="left:196.57px;top:247.33px;font-size:10.0px;color:#000;transform:scaleX(0.9850);">117.000</div>
<div class="t c" style="left:269.82px;top:247.33px;font-size:10.0px;color:#000;transform:scaleX(0.9850);">23.800</div>
<div class="t c" style="left:333.01px;top:247.33px;font-size:10.0px;color:#000;transform:scaleX(0.9850);">2.784.600.000</div>
<div class="t c" style="left:423.87px;top:247.33px;font-size:10.0px;color:#000;transform:scaleX(0.9850);">4.176.900</div>
<div class="t c" style="left:487.26px;top:247.33px;font-size:10.0px;color:#000;transform:scaleX(0.9850);">2.788.776.900</div>
<div class="t c" style="left:602.93px;top:246.33px;font-size:10.0px;color:#000;">-</div>
<div class="t c" style="left:660.53px;top:246.33px;font-size:10.0px;color:#000;">-</div>
<div class="t c" style="left:742.03px;top:246.33px;font-size:10.0px;color:#000;">-</div>
<div class="t c" style="left:50.90px;top:262.63px;font-size:10.0px;color:#000;transform:scaleX(0.8615);">GEX</div>
<div class="t c" style="left:111.64px;top:262.63px;font-size:10.0px;color:#000;transform:scaleX(1.0500);">23/5/2019</div>
<div class="t c" style="left:224.63px;top:261.63px;font-size:10.0px;color:#000;">-</div>
<div class="t c" style="left:293.53px;top:261.63px;font-size:10.0px;color:#000;">-</div>
<div class="t c" style="left:388.38px;top:261.63px;font-size:10.0px;color:#000;">-</div>
<div class="t c" style="left:464.18px;top:261.63px;font-size:10.0px;color:#000;">-</div>
<div class="t c" style="left:545.93px;top:261.63px;font-size:10.0px;color:#000;">-</div>
<div class="t c" style="left:577.64px;top:262.63px;font-size:10.0px;color:#000;transform:scaleX(0.9850);">163.000</div>
<div class="t c" style="left:638.62px;top:262.63px;font-size:10.0px;color:#000;transform:scaleX(0.9850);">21.050</div>
<div class="t c" style="left:685.76px;top:262.63px;font-size:10.0px;color:#000;transform:scaleX(0.9850);">3.431.150.000</div>
<div class="t c" style="left:49.75px;top:277.83px;font-size:10.0px;color:#000;transform:scaleX(1.0339);">CAV</div>
<div class="t c" style="left:111.64px;top:277.83px;font-size:10.0px;color:#000;transform:scaleX(1.0500);">24/5/2019</div>
<div class="t c" style="left:201.32px;top:277.83px;font-size:10.0px;color:#000;transform:scaleX(0.9850);">85.000</div>
<div class="t c" style="left:269.82px;top:277.83px;font-size:10.0px;color:#000;transform:scaleX(0.9850);">57.600</div>
<div class="t c" style="left:333.01px;top:277.83px;font-size:10.0px;color:#000;transform:scaleX(0.9850);">4.896.000.000</div>
<div class="t c" style="left:423.87px;top:277.83px;font-size:10.0px;color:#000;transform:scaleX(0.9850);">7.344.000</div>
<div class="t c" style="left:487.26px;top:277.83px;font-size:10.0px;color:#000;transform:scaleX(0.9850);">4.903.344.000</div>
<div class="t c" style="left:602.93px;top:276.83px;font-size:10.0px;color:#000;">-</div>
<div class="t c" style="left:660.53px;top:276.83px;font-size:10.0px;color:#000;">-</div>
<div class="t c" style="left:742.03px;top:276.83px;font-size:10.0px;color:#000;">-</div>
<div class="t c" style="left:49.75px;top:293.24px;font-size:10.0px;color:#000;transform:scaleX(1.0339);">CAV</div>
<div class="t c" style="left:111.64px;top:293.24px;font-size:10.0px;color:#000;transform:scaleX(1.0500);">29/5/2019</div>
<div class="t c" style="left:224.63px;top:292.24px;font-size:10.0px;color:#000;">-</div>
<div class="t c" style="left:293.53px;top:292.24px;font-size:10.0px;color:#000;">-</div>
<div class="t c" style="left:388.38px;top:292.24px;font-size:10.0px;color:#000;">-</div>
<div class="t c" style="left:464.18px;top:292.24px;font-size:10.0px;color:#000;">-</div>
<div class="t c" style="left:545.93px;top:292.24px;font-size:10.0px;color:#000;">-</div>
<div class="t c" style="left:583.12px;top:293.24px;font-size:10.0px;color:#000;transform:scaleX(0.9850);">85.000</div>
<div class="t c" style="left:638.62px;top:293.24px;font-size:10.0px;color:#000;transform:scaleX(0.9850);">50.500</div>
<div class="t c" style="left:685.76px;top:293.24px;font-size:10.0px;color:#000;transform:scaleX(0.9850);">4.292.500.000</div>
<div class="t c" style="left:51.75px;top:308.63px;font-size:10.0px;color:#000;transform:scaleX(0.9271);">S99</div>
<div class="t c" style="left:111.64px;top:308.63px;font-size:10.0px;color:#000;transform:scaleX(1.0500);">13/6/2019</div>
<div class="t c" style="left:195.84px;top:308.63px;font-size:10.0px;color:#000;transform:scaleX(0.9850);">225.000</div>
<div class="t c" style="left:275.29px;top:308.63px;font-size:10.0px;color:#000;transform:scaleX(0.9850);">9.700</div>
<div class="t c" style="left:333.01px;top:308.63px;font-size:10.0px;color:#000;transform:scaleX(0.9850);">2.182.500.000</div>
<div class="t c" style="left:423.87px;top:308.63px;font-size:10.0px;color:#000;transform:scaleX(0.9850);">3.273.750</div>
<div class="t c" style="left:487.26px;top:308.63px;font-size:10.0px;color:#000;transform:scaleX(0.9850);">2.185.773.750</div>
<div class="t c" style="left:602.93px;top:307.63px;font-size:10.0px;color:#000;">-</div>
<div class="t c" style="left:660.53px;top:307.63px;font-size:10.0px;color:#000;">-</div>
<div class="t c" style="left:742.03px;top:307.63px;font-size:10.0px;color:#000;">-</div>
<div class="t c" style="left:51.75px;top:324.04px;font-size:10.0px;color:#000;transform:scaleX(0.9271);">S99</div>
<div class="t c" style="left:111.64px;top:324.04px;font-size:10.0px;color:#000;transform:scaleX(1.0500);">18/6/2019</div>
<div class="t c" style="left:224.63px;top:323.04px;font-size:10.0px;color:#000;">-</div>
<div class="t c" style="left:293.53px;top:323.04px;font-size:10.0px;color:#000;">-</div>
<div class="t c" style="left:388.38px;top:323.04px;font-size:10.0px;color:#000;">-</div>
<div class="t c" style="left:464.18px;top:323.04px;font-size:10.0px;color:#000;">-</div>
<div class="t c" style="left:545.93px;top:323.04px;font-size:10.0px;color:#000;">-</div>
<div class="t c" style="left:577.64px;top:324.04px;font-size:10.0px;color:#000;transform:scaleX(0.9850);">225.000</div>
<div class="t c" style="left:644.09px;top:324.04px;font-size:10.0px;color:#000;transform:scaleX(0.9850);">7.900</div>
<div class="t c" style="left:685.76px;top:324.04px;font-size:10.0px;color:#000;transform:scaleX(0.9850);">1.777.500.000</div>
<div class="t c" style="left:50.90px;top:339.24px;font-size:10.0px;color:#000;transform:scaleX(0.8615);">GEX</div>
<div class="t c" style="left:108.72px;top:339.24px;font-size:10.0px;color:#000;transform:scaleX(1.0500);">10/12/2019</div>
<div class="t c" style="left:195.84px;top:339.24px;font-size:10.0px;color:#000;transform:scaleX(0.9850);">820.000</div>
<div class="t c" style="left:269.82px;top:339.24px;font-size:10.0px;color:#000;transform:scaleX(0.9850);">21.400</div>
<div class="t c" style="left:327.53px;top:339.24px;font-size:10.0px;color:#000;transform:scaleX(0.9850);">17.548.000.000</div>
<div class="t c" style="left:418.39px;top:339.24px;font-size:10.0px;color:#000;transform:scaleX(0.9850);">26.322.000</div>
<div class="t c" style="left:481.78px;top:339.24px;font-size:10.0px;color:#000;transform:scaleX(0.9850);">17.574.322.000</div>
<div class="t c" style="left:602.93px;top:338.24px;font-size:10.0px;color:#000;">-</div>
<div class="t c" style="left:660.53px;top:338.24px;font-size:10.0px;color:#000;">-</div>
<div class="t c" style="left:742.03px;top:338.24px;font-size:10.0px;color:#000;">-</div>
<div class="t c" style="left:50.90px;top:354.33px;font-size:10.0px;color:#000;transform:scaleX(0.8615);">GEX</div>
<div class="t c" style="left:108.72px;top:354.33px;font-size:10.0px;color:#000;transform:scaleX(1.0500);">10/12/2019</div>
<div class="t c" style="left:195.84px;top:354.33px;font-size:10.0px;color:#000;transform:scaleX(0.9850);">384.000</div>
<div class="t c" style="left:269.82px;top:354.33px;font-size:10.0px;color:#000;transform:scaleX(0.9850);">21.400</div>
<div class="t c" style="left:333.01px;top:354.33px;font-size:10.0px;color:#000;transform:scaleX(0.9850);">8.217.600.000</div>
<div class="t c" style="left:418.39px;top:354.33px;font-size:10.0px;color:#000;transform:scaleX(0.9850);">12.326.400</div>
<div class="t c" style="left:487.26px;top:354.33px;font-size:10.0px;color:#000;transform:scaleX(0.9850);">8.229.926.400</div>
<div class="t c" style="left:602.93px;top:353.33px;font-size:10.0px;color:#000;">-</div>
<div class="t c" style="left:660.53px;top:353.33px;font-size:10.0px;color:#000;">-</div>
<div class="t c" style="left:742.03px;top:353.33px;font-size:10.0px;color:#000;">-</div>
<div class="t c" style="left:50.90px;top:369.74px;font-size:10.0px;color:#000;transform:scaleX(0.8615);">GEX</div>
<div class="t c" style="left:108.72px;top:369.74px;font-size:10.0px;color:#000;transform:scaleX(1.0500);">16/12/2019</div>
<div class="t c" style="left:224.63px;top:368.74px;font-size:10.0px;color:#000;">-</div>
<div class="t c" style="left:293.53px;top:368.74px;font-size:10.0px;color:#000;">-</div>
<div class="t c" style="left:388.38px;top:368.74px;font-size:10.0px;color:#000;">-</div>
<div class="t c" style="left:464.18px;top:368.74px;font-size:10.0px;color:#000;">-</div>
<div class="t c" style="left:545.93px;top:368.74px;font-size:10.0px;color:#000;">-</div>
<div class="t c" style="left:577.64px;top:369.74px;font-size:10.0px;color:#000;transform:scaleX(0.9850);">504.000</div>
<div class="t c" style="left:638.62px;top:369.74px;font-size:10.0px;color:#000;transform:scaleX(0.9850);">18.500</div>
<div class="t c" style="left:685.76px;top:369.74px;font-size:10.0px;color:#000;transform:scaleX(0.9850);">9.324.000.000</div>
<div class="t c" style="left:50.90px;top:385.04px;font-size:10.0px;color:#000;transform:scaleX(0.8615);">GEX</div>
<div class="t c" style="left:108.72px;top:385.04px;font-size:10.0px;color:#000;transform:scaleX(1.0500);">19/12/2019</div>
<div class="t c" style="left:224.63px;top:384.04px;font-size:10.0px;color:#000;">-</div>
<div class="t c" style="left:293.53px;top:384.04px;font-size:10.0px;color:#000;">-</div>
<div class="t c" style="left:388.38px;top:384.04px;font-size:10.0px;color:#000;">-</div>
<div class="t c" style="left:464.18px;top:384.04px;font-size:10.0px;color:#000;">-</div>
<div class="t c" style="left:545.93px;top:384.04px;font-size:10.0px;color:#000;">-</div>
<div class="t c" style="left:577.64px;top:385.04px;font-size:10.0px;color:#000;transform:scaleX(0.9850);">220.000</div>
<div class="t c" style="left:638.62px;top:385.04px;font-size:10.0px;color:#000;transform:scaleX(0.9850);">18.500</div>
<div class="t c" style="left:685.76px;top:385.04px;font-size:10.0px;color:#000;transform:scaleX(0.9850);">4.070.000.000</div>
<div class="t c" style="left:50.90px;top:399.63px;font-size:10.0px;color:#000;transform:scaleX(0.8615);">GEX</div>
<div class="t c" style="left:108.72px;top:399.63px;font-size:10.0px;color:#000;transform:scaleX(1.0500);">19/12/2019</div>
<div class="t c" style="left:224.63px;top:398.63px;font-size:10.0px;color:#000;">-</div>
<div class="t c" style="left:293.53px;top:398.63px;font-size:10.0px;color:#000;">-</div>
<div class="t c" style="left:388.38px;top:398.63px;font-size:10.0px;color:#000;">-</div>
<div class="t c" style="left:464.18px;top:398.63px;font-size:10.0px;color:#000;">-</div>
<div class="t c" style="left:545.93px;top:398.63px;font-size:10.0px;color:#000;">-</div>
<div class="t c" style="left:577.64px;top:399.63px;font-size:10.0px;color:#000;transform:scaleX(0.9850);">480.000</div>
<div class="t c" style="left:638.62px;top:399.63px;font-size:10.0px;color:#000;transform:scaleX(0.9850);">18.500</div>
<div class="t c" style="left:685.76px;top:399.63px;font-size:10.0px;color:#000;transform:scaleX(0.9850);">8.880.000.000</div>
</body></html>
